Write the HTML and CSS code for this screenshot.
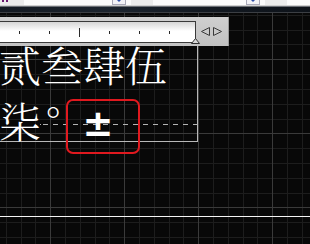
FILE: index.html
```html
<!DOCTYPE html>
<html>
<head>
<meta charset="utf-8">
<link rel="stylesheet" href="styles.css">
</head>
<body>
<div class="toolbar">
  <div class="tb-icon"><span class="mark"></span><span class="mark"></span></div>
  <div class="tb-btn b1"><span class="arrow"></span></div>
  <div class="tb-field"></div>
  <div class="tb-btn b2"><span class="arrow"></span></div>
  <div class="tb-field"></div>
</div>
<div class="sep-light"></div>
<div class="sep-dark"></div>
<div class="band"></div>
<div class="band-edge"></div>
<div class="canvas">
  <svg class="grid" width="310" height="231" viewBox="0 0 310 231">
    <g fill="#1d1d1d">
      <rect x="6" y="0" width="1" height="231"/>
      <rect x="21" y="0" width="1" height="231"/>
      <rect x="35" y="0" width="1" height="231"/>
      <rect x="65" y="0" width="1" height="231"/>
      <rect x="80" y="0" width="1" height="231"/>
      <rect x="95" y="0" width="1" height="231"/>
      <rect x="109" y="0" width="1" height="231"/>
      <rect x="139" y="0" width="1" height="231"/>
      <rect x="154" y="0" width="1" height="231"/>
      <rect x="169" y="0" width="1" height="231"/>
      <rect x="183" y="0" width="1" height="231"/>
      <rect x="213" y="0" width="1" height="231"/>
      <rect x="228" y="0" width="1" height="231"/>
      <rect x="243" y="0" width="1" height="231"/>
      <rect x="257" y="0" width="1" height="231"/>
      <rect x="287" y="0" width="1" height="231"/>
      <rect x="302" y="0" width="1" height="231"/>
      <rect x="0" y="2" width="310" height="1"/>
      <rect x="0" y="17" width="310" height="1"/>
      <rect x="0" y="31" width="310" height="1"/>
      <rect x="0" y="61" width="310" height="1"/>
      <rect x="0" y="76" width="310" height="1"/>
      <rect x="0" y="91" width="310" height="1"/>
      <rect x="0" y="106" width="310" height="1"/>
      <rect x="0" y="135" width="310" height="1"/>
      <rect x="0" y="150" width="310" height="1"/>
      <rect x="0" y="165" width="310" height="1"/>
      <rect x="0" y="180" width="310" height="1"/>
      <rect x="0" y="209" width="310" height="1"/>
      <rect x="0" y="224" width="310" height="1"/>
    </g>
    <g fill="#3a3a3a">
      <rect x="50" y="0" width="1" height="231"/>
      <rect x="124" y="0" width="1" height="231"/>
      <rect x="198" y="0" width="1" height="231"/>
      <rect x="272" y="0" width="1" height="231"/>
      <rect x="0" y="46" width="310" height="1"/>
      <rect x="0" y="120" width="310" height="1"/>
      <rect x="0" y="194" width="310" height="1"/>
    </g>
  </svg>
  <div class="content">
    <div class="ruler-panel">
      <div class="ruler">
        <span class="tick"></span>
        <span class="tick"></span>
        <span class="tick big"></span>
        <span class="tick"></span>
        <span class="tick"></span>
        <span class="tick"></span>
        <svg class="marker" width="9" height="6" viewBox="0 0 9 6"><polygon points="4.5,0.5 8.5,5.5 0.5,5.5" fill="#d8d8d8" stroke="#303030" stroke-width="1"/></svg>
      </div>
      <svg class="arrows" width="22" height="9" viewBox="0 0 22 9">
        <polygon points="0.5,4.5 8.5,0.5 8.5,8.5" fill="none" stroke="#3a3a3a" stroke-width="1"/>
        <polygon points="12.5,0.5 20.5,4.5 12.5,8.5" fill="none" stroke="#3a3a3a" stroke-width="1"/>
      </svg>
    </div>
    <div class="frame">
      <div class="text">
        <div class="line">贰叁肆伍</div>
        <div class="line">柒<span class="deg">°</span></div>
      </div>
      <div class="baseline"></div>
    </div>
    <div class="hline"></div>
    <div class="sel-box"><span class="sym">±</span></div>
  </div>
</div>
</body>
</html>
```
FILE: styles.css
```css
html, body {
  margin: 0;
  padding: 0;
}
body {
  width: 310px;
  height: 244px;
  overflow: hidden;
  background: #080808;
  font-family: "Liberation Sans", sans-serif;
}
.toolbar {
  display: flex;
  height: 5px;
  background: #fbfbfb;
}
.tb-icon {
  width: 22px;
  background: #ebebeb;
  display: flex;
  gap: 2px;
  padding-left: 2px;
}
.mark {
  width: 2px;
  height: 2px;
  background: #6a1a70;
}
.tb-btn {
  width: 12px;
  border: 1px solid #a9a9b8;
  border-top: none;
  background: #f2f2f6;
  display: flex;
  justify-content: center;
}
.tb-btn.b1 { margin-left: 88px; }
.tb-btn.b2 { margin-left: 93px; }
.arrow {
  width: 0;
  height: 0;
  border-left: 2px solid transparent;
  border-right: 2px solid transparent;
  border-top: 2px solid #3050a8;
}
.tb-field {
  width: 22px;
  margin-left: 5px;
  background: #ececec;
}
.sep-light { height: 1px; background: #cfcfcf; }
.sep-dark { height: 1px; background: #6b6f75; }
.band {
  height: 5px;
  background: linear-gradient(90deg, #141a22 0%, #1c242e 35%, #121820 70%, #0e131a 100%);
}
.band-edge { height: 1px; background: #3c3f44; }
.canvas {
  display: grid;
  height: 231px;
  overflow: hidden;
}
.grid, .content {
  grid-area: 1 / 1;
}
.content {
  position: relative;
  display: flex;
  flex-direction: column;
}
.ruler-panel {
  margin-top: 4px;
  width: 229px;
  height: 29px;
  box-sizing: border-box;
  background: linear-gradient(180deg, #cfcfcf 0%, #c2c2c2 100%);
  border-right: 1px solid #9a9a9a;
  display: flex;
  align-items: flex-start;
  position: relative;
  z-index: 1;
}
.ruler {
  position: relative;
  margin-top: 4px;
  margin-left: -1px;
  width: 197px;
  height: 22px;
  box-sizing: border-box;
  border: 1px solid #3a3a3a;
  background: linear-gradient(180deg, #d6d6d6 0%, #ffffff 45%, #ffffff 100%);
  display: flex;
  align-items: center;
  padding-left: 19px;
  gap: 29px;
}
.tick {
  width: 1px;
  height: 3px;
  background: #2a2a2a;
}
.tick.big {
  height: 9px;
}
.marker {
  position: absolute;
  right: -5px;
  bottom: -2px;
}
.arrows {
  margin-left: 5px;
  margin-top: 10px;
}
.frame {
  width: 198px;
  height: 96px;
  box-sizing: border-box;
  border-right: 1px solid #b8b8b8;
  border-bottom: 1px solid #b8b8b8;
  position: relative;
}
.text {
  margin-top: -10px;
  margin-left: -1px;
  color: #ffffff;
  font-family: "Noto Serif CJK SC", "Noto Sans CJK SC", sans-serif;
  font-weight: 300;
  font-size: 42px;
  line-height: 56px;
  white-space: nowrap;
  position: relative;
  z-index: 2;
}
.deg {
  margin-left: 5px;
}
.baseline {
  position: absolute;
  left: 40px;
  right: 0;
  top: 78px;
  height: 1px;
  background: repeating-linear-gradient(90deg, #b4b4b4 0 5px, transparent 5px 10px);
  background-position: 3px 0;
}
.hline {
  margin-top: 74px;
  height: 1px;
  background: #f4f4f4;
}
.sel-box {
  position: absolute;
  left: 66px;
  top: 86px;
  width: 74px;
  height: 55px;
  box-sizing: border-box;
  border: 2px solid #e0191f;
  border-radius: 7px;
  display: flex;
  align-items: center;
  justify-content: center;
  padding-right: 10px;
  padding-bottom: 7px;
  z-index: 3;
}
.sym {
  color: #ffffff;
  font-family: "DejaVu Sans", sans-serif;
  font-weight: bold;
  font-size: 37px;
  line-height: 1;
}
```
